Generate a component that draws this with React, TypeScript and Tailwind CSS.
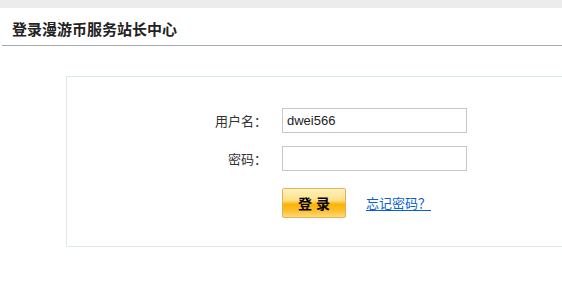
import React from "react";

const cjk = { fontFamily: '"Noto Sans CJK SC", "Liberation Sans", sans-serif' };

export default function App() {
  return (
    <div className="w-[562px] h-[287px] overflow-hidden bg-white" style={cjk}>
      <div className="h-[8px] bg-[#ececec]" />
      <div className="ml-[2px] h-[38px] pl-[10px] pt-[11px] border-b border-[#a4aeb2]">
        <h1 className="text-[15px] leading-[20px] font-bold text-[#222]">登录漫游币服务站长中心</h1>
      </div>
      <div className="ml-[66px] mt-[30px] w-[540px] h-[171px] border border-[#dce9e9] pt-[31px]">
        <div className="flex items-center h-[25px]">
          <label className="w-[200px] text-right text-[13px] leading-[25px] text-[#333]">用户名：</label>
          <div className="ml-[15px] w-[185px] h-[25px] border border-[#c8c8c8] flex items-center pl-[4px]">
            <span className="text-[13px] text-[#222]" style={{ fontFamily: '"Liberation Sans", Arial, sans-serif' }}>
              dwei566
            </span>
          </div>
        </div>
        <div className="flex items-center h-[25px] mt-[13px]">
          <label className="w-[200px] text-right text-[13px] leading-[25px] text-[#333]">密码：</label>
          <div className="ml-[15px] w-[185px] h-[25px] border border-[#c8c8c8]" />
        </div>
        <div className="flex items-center mt-[17px] ml-[215px]">
          <button className="w-[64px] h-[30px] rounded-[2px] border border-[#e2b25a] bg-[linear-gradient(#fff2bd,#ffe08a_40%,#fbb405_55%,#fcbd2a_75%,#ffd978)] text-[14px] font-bold text-black leading-[28px] tracking-[4px] pl-[4px]">
            登录
          </button>
          <a href="#" className="ml-[20px] text-[13px] text-[#0b5fd6] underline underline-offset-[2px]">
            忘记密码？
          </a>
        </div>
      </div>
    </div>
  );
}
